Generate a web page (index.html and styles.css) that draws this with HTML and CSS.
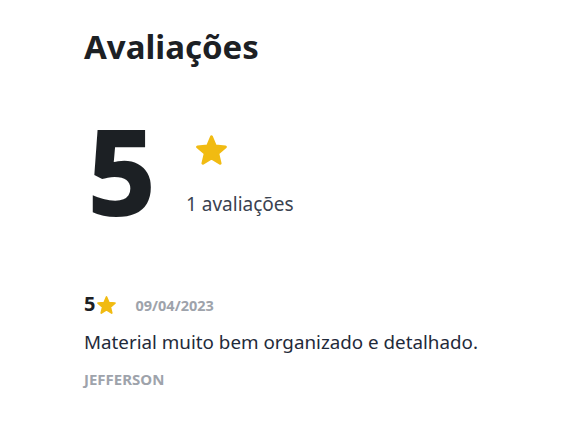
FILE: index.html
```html
<!DOCTYPE html>
<html lang="pt-BR">
<head>
<meta charset="utf-8">
<title>Avaliações</title>
<link rel="stylesheet" href="styles.css">
</head>
<body>
<main class="page">
  <h1 class="title">Avaliações</h1>
  <section class="summary">
    <div class="score">5</div>
    <div class="summary-side">
      <svg class="star star-lg" viewBox="-10.6 -11.1 21.2 20.3" aria-hidden="true"><path d="M0,-10 L2.645,-3.641 L9.511,-3.09 L4.28,1.391 L5.878,8.09 L0,4.5 L-5.878,8.09 L-4.28,1.391 L-9.511,-3.09 L-2.645,-3.641 Z"/></svg>
      <div class="count">1 avaliações</div>
    </div>
  </section>
  <article class="review">
    <div class="review-head">
      <span class="rating"><span class="rating-num">5</span><svg class="star star-sm" viewBox="-10.6 -11.1 21.2 20.3" aria-hidden="true"><path d="M0,-10 L2.645,-3.641 L9.511,-3.09 L4.28,1.391 L5.878,8.09 L0,4.5 L-5.878,8.09 L-4.28,1.391 L-9.511,-3.09 L-2.645,-3.641 Z"/></svg></span>
      <span class="date">09/04/2023</span>
    </div>
    <p class="review-text">Material muito bem organizado e detalhado.</p>
    <div class="author">JEFFERSON</div>
  </article>
</main>
</body>
</html>
```

FILE: styles.css
```css
* { box-sizing: border-box; }
html, body { margin: 0; background: #fff; }
body {
  font-family: "Noto Sans", "Open Sans", sans-serif;
  color: #1f2329;
}
.page {
  padding: 22px 0 0 84px;
}
.title {
  margin: 0;
  font-size: 33px;
  font-weight: 700;
  line-height: 50px;
  color: #1c2024;
}
.summary {
  display: flex;
  align-items: flex-start;
  margin-top: 38px;
}
.score {
  font-size: 120px;
  font-weight: 800;
  line-height: 120px;
  color: #1c2024;
  width: 99px;
  margin-left: 3px;
}
.summary-side {
  display: flex;
  flex-direction: column;
}
.star {
  fill: #f1bb12;
  stroke: #f1bb12;
  stroke-width: 2;
  stroke-linejoin: round;
}
.star-lg {
  width: 31px;
  height: 30px;
  margin: 25px 0 0 10px;
}
.count {
  margin-top: 26px;
  font-size: 19px;
  color: #3a4250;
}
.review {
  margin-top: 62px;
}
.review-head {
  display: flex;
  align-items: baseline;
  gap: 19px;
}
.rating {
  display: inline-flex;
  align-items: flex-start;
  gap: 2px;
  font-size: 20px;
  font-weight: 700;
  line-height: 24px;
  color: #1c2024;
}
.star-sm {
  width: 19px;
  height: 18px;
  margin-top: 4px;
}
.date {
  font-size: 14.5px;
  font-weight: 700;
  color: #9ea3ab;
}
.review-text {
  margin: 13px 0 0;
  font-size: 18.8px;
  color: #1f2a3a;
}
.author {
  margin-top: 13.5px;
  font-size: 15px;
  font-weight: 700;
  color: #9ea3ab;
}
```
